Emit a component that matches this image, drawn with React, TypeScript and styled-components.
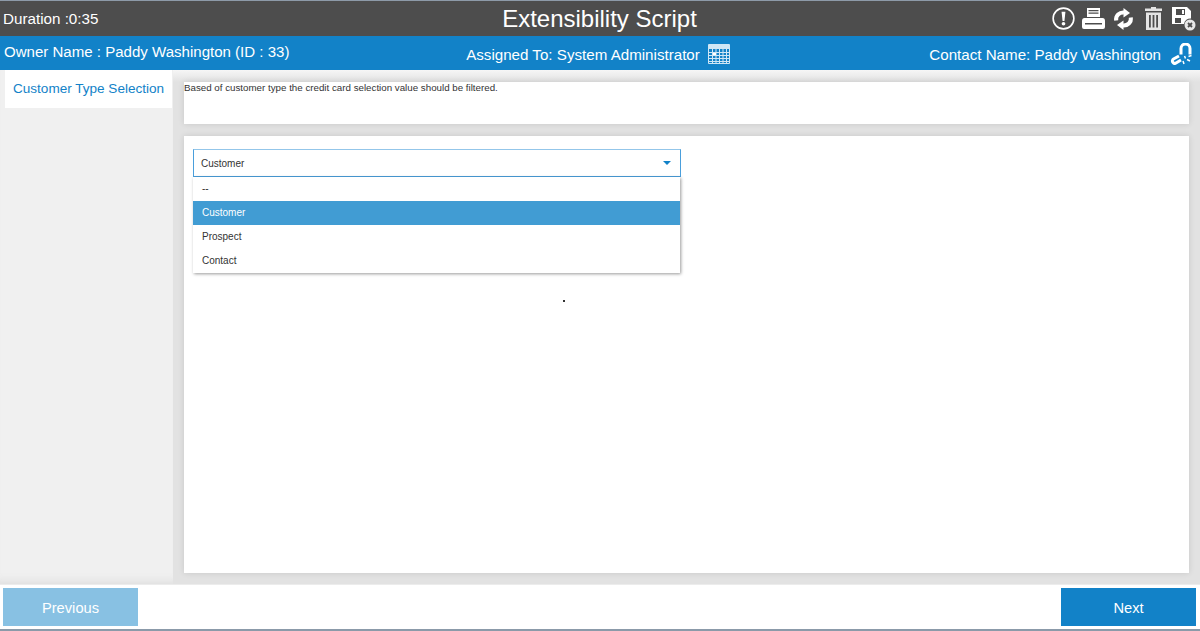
import React from 'react';
import styled, { createGlobalStyle } from 'styled-components';

const GlobalStyle = createGlobalStyle`
  html, body {
    margin: 0;
    padding: 0;
    height: 100%;
    overflow: hidden;
    background: #fff;
    font-family: "Liberation Sans", Arial, sans-serif;
  }
  * { box-sizing: border-box; }
`;

const Page = styled.div`
  width: 1200px;
  height: 631px;
  display: flex;
  flex-direction: column;
`;

const TitleBar = styled.header`
  height: 36px;
  flex: none;
  display: grid;
  grid-template-columns: 1fr auto 1fr;
  align-items: center;
  padding: 0 4px 0 3px;
  background: #4d4d4d;
  border-top: 1px solid #8d9aa8;
  color: #fff;
`;

const Duration = styled.span`
  font-size: 15.2px;
`;

const Title = styled.h1`
  margin: 0;
  font-size: 24px;
  font-weight: 400;
  line-height: 34px;
`;

const Tools = styled.div`
  display: flex;
  justify-content: flex-end;
  align-items: center;
  gap: 7px;

  svg:nth-child(3) { margin-left: 1px; }
  svg:nth-child(4) { margin-left: 4px; }
  svg:nth-child(5) { margin-left: 3px; }
`;

const InfoBar = styled.div`
  height: 34px;
  flex: none;
  display: grid;
  grid-template-columns: 1fr auto 1fr;
  align-items: center;
  padding: 0 8px 0 4px;
  background: #1282c8;
  color: #fff;
  font-size: 15.15px;
`;

const Owner = styled.span`
  padding-bottom: 3px;
  font-size: 15.05px;
`;

const Assigned = styled.div`
  display: flex;
  align-items: center;
  gap: 8px;
  padding-top: 2px;
`;

const Contact = styled.div`
  display: flex;
  justify-content: flex-end;
  align-items: center;
  gap: 9px;
  padding-top: 2px;
`;

const Body = styled.div`
  flex: 1;
  min-height: 0;
  display: flex;
  background: linear-gradient(#f6f6f6, #e2e2e2 12px);
`;

const Sidebar = styled.nav`
  width: 173px;
  flex: none;
  padding: 0 1px 0 5px;
  background: #f0f0f0;
  box-shadow: inset 0 -10px 10px -8px #dcdcdc;
`;

const SideTab = styled.div`
  height: 38px;
  display: flex;
  align-items: center;
  padding: 0 0 2px 8px;
  background: #fff;
  color: #1282c8;
  font-size: 13.55px;
`;

const Content = styled.main`
  flex: 1;
  display: flex;
  flex-direction: column;
  gap: 12px;
  padding: 12px 11px 11px;
`;

const Panel = styled.section`
  background: #fff;
  box-shadow: 0 0 6px rgba(0, 0, 0, 0.12);
`;

const NotePanel = styled(Panel)`
  height: 42px;
  flex: none;
  font-size: 9.76px;
  line-height: 11px;
  color: #333;
`;

const FormPanel = styled(Panel)`
  flex: 1;
  position: relative;
  padding: 13px 9px;
`;

const Field = styled.div`
  position: relative;
  width: 488px;
`;

const SelectBox = styled.div`
  height: 28px;
  display: flex;
  justify-content: space-between;
  align-items: center;
  padding: 0 9px 0 7px;
  border: 1px solid #4a9fdc;
  border-top-color: #93c6ea;
  background: #fff;
  color: #333;
  font-size: 10px;
`;

const Caret = styled.span`
  width: 0;
  height: 0;
  border-left: 4px solid transparent;
  border-right: 4px solid transparent;
  border-top: 4px solid #1282c8;
`;

const Menu = styled.ul`
  position: absolute;
  top: 28px;
  left: 0;
  right: 1px;
  margin: 0;
  padding: 0;
  list-style: none;
  background: #fff;
  box-shadow: 1px 1px 3px rgba(0, 0, 0, 0.4);
`;

const MenuItem = styled.li<{ $active?: boolean }>`
  height: 24px;
  display: flex;
  align-items: center;
  padding: 0 0 2px 9px;
  font-size: 10px;
  color: ${({ $active }) => ($active ? '#fff' : '#333')};
  background: ${({ $active }) => ($active ? '#419cd3' : 'transparent')};
`;

const Speck = styled.i`
  position: absolute;
  left: 379px;
  top: 164px;
  width: 2px;
  height: 2px;
  background: #333;
`;

const Footer = styled.footer`
  height: 47px;
  flex: none;
  display: flex;
  justify-content: space-between;
  padding: 3px 4px 4px 3px;
  background: #fff;
  border-top: 1px solid #ececec;
  border-bottom: 2px solid #8b9aa9;
`;

const NavButton = styled.button<{ $disabled?: boolean }>`
  width: 135px;
  height: 38px;
  border: 0;
  padding: 1px 0 0;
  color: #fff;
  font-family: inherit;
  font-size: 14.7px;
  background: ${({ $disabled }) => ($disabled ? '#88c1e3' : '#1282c8')};
`;

const AlertIcon = () => (
  <svg width="23" height="23" viewBox="0 0 24 24" fill="none">
    <circle cx="12" cy="12" r="10.8" stroke="#fff" strokeWidth="1.7" />
    <path d="M10 5h4l-1 9.500h-2z" fill="#fff" />
    <circle cx="12" cy="17.500" r="1.900" fill="#fff" />
  </svg>
);

const PrinterIcon = () => (
  <svg width="23" height="22" viewBox="0 0 23 22" fill="#fff">
    <path d="M5 0h13v9H5zM6.500 2v1.200h10V2zm0 2.600v1.200h10V4.600z" fillRule="evenodd" />
    <path d="M2.500 10h18Q23 10 23 13v6q0 2-2 2H2q-2 0-2-2v-6q0-3 2.500-3zM3 15v1.500h17V15z" fillRule="evenodd" />
  </svg>
);

const RefreshIcon = () => (
  <svg width="21" height="22" viewBox="0 0 21 22" fill="none">
    <path d="M3.200 12.500C2.400 7.500 6.500 4.200 11 4.600" stroke="#fff" strokeWidth="4" />
    <path d="M10.500 0l6.500 5-6.500 4.500z" fill="#fff" />
    <path d="M17.800 9.500c.8 5-3.300 8.300-7.800 7.900" stroke="#fff" strokeWidth="4" />
    <path d="M10.500 22L4 17l6.500-4.500z" fill="#fff" />
  </svg>
);

const TrashIcon = () => (
  <svg width="17" height="23" viewBox="0 0 17 23" fill="#e4e4e4">
    <path d="M6 0h5v1.500h6V4H0V1.500h6z" />
    <path d="M1 5.500h15V23H1zM4 8v12.500h1.800V8zm3.600 0v12.500h1.800V8zm3.600 0v12.500H13V8z" fillRule="evenodd" />
  </svg>
);

const SaveCloseIcon = () => (
  <svg width="24" height="24" viewBox="0 0 24 24">
    <path d="M0 0h15l4 4v7.500a6.500 6.500 0 0 0-7 5.500H0zM4 2v6h9V2zM10 3h2v4h-2zM3 11v5h6v-5z" fill="#fff" fillRule="evenodd" />
    <circle cx="18" cy="18" r="5.500" fill="#e8e8e8" />
    <path d="M16 16l4 4m0-4l-4 4" stroke="#4d4d4d" strokeWidth="1.800" />
  </svg>
);

const CalendarIcon = () => (
  <svg width="22" height="20" viewBox="0 0 22 20">
    <rect width="22" height="20" rx="1" fill="#cfe6f5" />
    <rect x="1" y="5" width="20" height="14" fill="#1282c8" />
    <path
      d="M1 8.500h20M1 11.500h20M1 14.500h20M1 17.500h20M4.500 5v14M8 5v14M11.500 5v14M15 5v14M18.500 5v14"
      stroke="#cfe6f5"
    />
    <rect x="5" y="9" width="3" height="2" fill="#fff" />
  </svg>
);

const UnlinkIcon = () => (
  <svg width="22" height="22" viewBox="0 0 22 22" fill="none" stroke="#fff">
    <path d="M11 11.500V5.500a4.500 4.500 0 0 1 9 0v6" strokeWidth="3" />
    <path d="M9 13l-5.500 3a2.200 2.200 0 0 0 2.500 4l5-3" strokeWidth="3" />
    <path d="M14.500 13l1 2.500M21.500 12.500l-3 1M17 16.500l3 1.500M13 18l1 3" strokeWidth="1.500" />
  </svg>
);

const options = ['--', 'Customer', 'Prospect', 'Contact'];

const App: React.FC = () => (
  <Page>
    <GlobalStyle />
    <TitleBar>
      <Duration>Duration :0:35</Duration>
      <Title>Extensibility Script</Title>
      <Tools>
        <AlertIcon />
        <PrinterIcon />
        <RefreshIcon />
        <TrashIcon />
        <SaveCloseIcon />
      </Tools>
    </TitleBar>
    <InfoBar>
      <Owner>Owner Name : Paddy Washington (ID : 33)</Owner>
      <Assigned>
        Assigned To: System Administrator
        <CalendarIcon />
      </Assigned>
      <Contact>
        Contact Name: Paddy Washington
        <UnlinkIcon />
      </Contact>
    </InfoBar>
    <Body>
      <Sidebar>
        <SideTab>Customer Type Selection</SideTab>
      </Sidebar>
      <Content>
        <NotePanel>Based of customer type the credit card selection value should be filtered.</NotePanel>
        <FormPanel>
          <Field>
            <SelectBox>
              Customer
              <Caret />
            </SelectBox>
            <Menu>
              {options.map((option) => (
                <MenuItem key={option} $active={option === 'Customer'}>
                  {option}
                </MenuItem>
              ))}
            </Menu>
          </Field>
          <Speck />
        </FormPanel>
      </Content>
    </Body>
    <Footer>
      <NavButton $disabled>Previous</NavButton>
      <NavButton>Next</NavButton>
    </Footer>
  </Page>
);

export default App;
